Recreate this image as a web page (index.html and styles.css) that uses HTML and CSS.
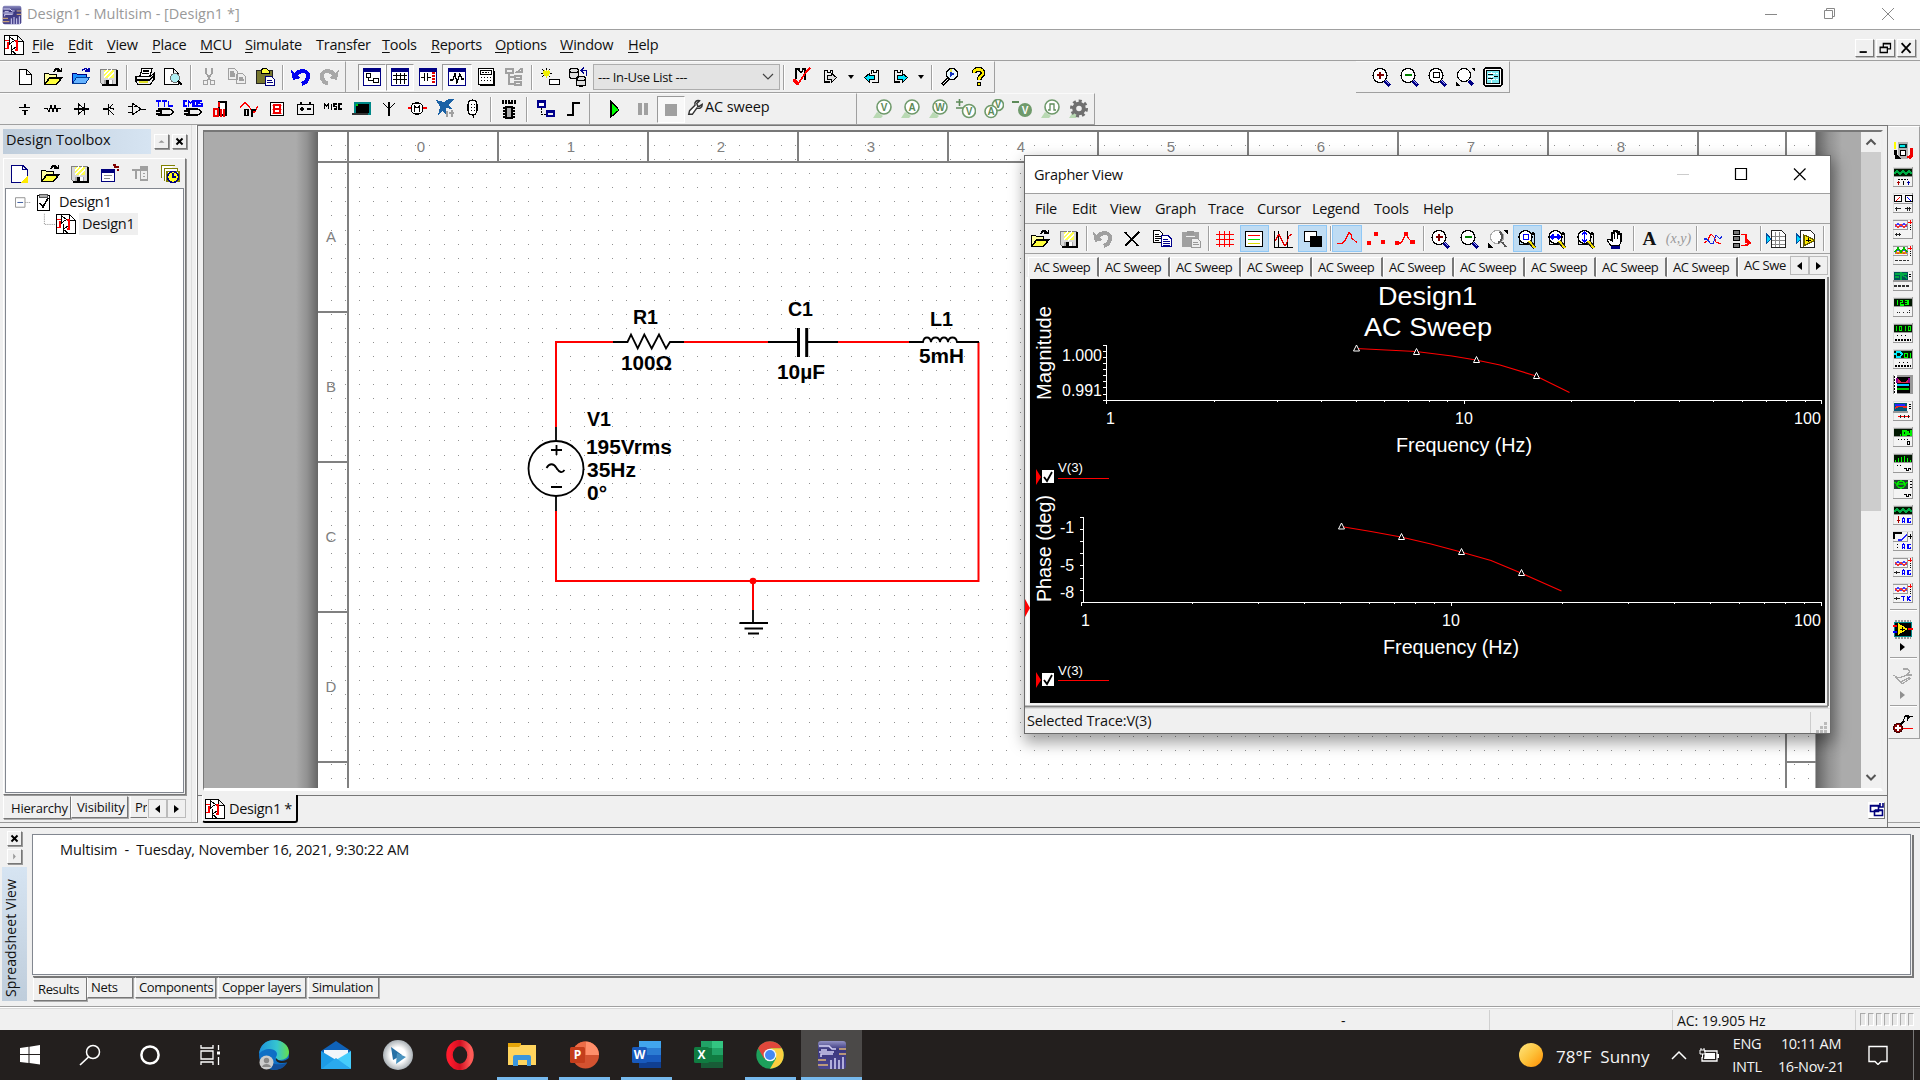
FILE: index.html
```html
<!DOCTYPE html>
<html lang="en">
<head>
<meta charset="utf-8">
<title>Design1 - Multisim - [Design1 *]</title>
<link rel="stylesheet" href="styles.css">
</head>
<body>
<svg class="defs" aria-hidden="true">
<defs>
<linearGradient id="gl" x1="0" x2="1" y1="0" y2="0"><stop offset="0" stop-color="#ababab"/><stop offset=".5" stop-color="#929292"/><stop offset="1" stop-color="#666"/></linearGradient>
<linearGradient id="gr" x1="0" x2="1" y1="0" y2="0"><stop offset="0" stop-color="#666"/><stop offset=".5" stop-color="#929292"/><stop offset="1" stop-color="#ababab"/></linearGradient>
<linearGradient id="sun" x1="0" x2="1" y1="0" y2="1"><stop offset="0" stop-color="#ffe680"/><stop offset=".5" stop-color="#fdc33c"/><stop offset="1" stop-color="#ff8c00"/></linearGradient>
<linearGradient id="edgeA" x1="0" x2="1" y1="0" y2="0"><stop offset="0" stop-color="#1c93dd"/><stop offset=".6" stop-color="#36c5d0"/><stop offset="1" stop-color="#66e04a"/></linearGradient>
<linearGradient id="opera" x1="0" x2="1" y1="0" y2="0"><stop offset="0" stop-color="#ff1b2d"/><stop offset=".5" stop-color="#d30e20"/><stop offset="1" stop-color="#ff5b57"/></linearGradient>
<radialGradient id="play"><stop offset=".5" stop-color="#fff"/><stop offset="1" stop-color="#a9b0b5"/></radialGradient>
<linearGradient id="ms" x1="0" x2="0" y1="0" y2="1"><stop offset="0" stop-color="#9292c4"/><stop offset=".3" stop-color="#3a377e"/><stop offset="1" stop-color="#4c4690"/></linearGradient>
</defs>
<symbol id="new" viewBox="0 0 20 20"><path d="M4.500 2.500h7l5 5v10h-12zM11.500 2.500v5h5" fill="#fff" stroke="#000" stroke-width="1.300"/></symbol>
<symbol id="open" viewBox="0 0 20 20"><path d="M1.500 17V6.500h4l1 1h7V11" fill="#ffffa0" stroke="#000"/><path d="M1.500 17.500l5-6.500h12l-5 6.500z" fill="#ffff3c" stroke="#000" stroke-width="1.500"/><path d="M11 5c1-4 5-4 6-1m-3 0h4.500V.5" stroke="#000" stroke-width="1.600"/></symbol>
<symbol id="openb" viewBox="0 0 20 20"><path d="M1.500 17V6.500h4l1 1h9V11" fill="#1e90ff" stroke="#00007c"/><path d="M1.500 16.500l4-6h13l-4 6z" fill="#66b3ff" stroke="#003c96"/><path d="M11 4c2-3 5-3 6 0m-3 0h4V1" stroke="#00a" stroke-width="1.400"/></symbol>
<symbol id="save" viewBox="0 0 20 20"><path d="M1.500 2.500h16v15h-14l-2-2z" fill="#d8d8d8" stroke="#808080"/><path d="M5 3h10v8H5z" fill="#ffff50"/><path d="M5 6l4-3M5 10l8-7M9 11l6-5" stroke="#fff" stroke-width="1.500"/><path d="M5 12.500h9v5H5z" fill="#aaa"/><path d="M10 13h3v4h-3z" fill="#fff"/><path d="M3 18h15V3" stroke="#000" stroke-width="1.600"/><path d="M7 13h3v5H7z" fill="#000"/></symbol>
<symbol id="print" viewBox="0 0 20 20"><path d="M5 9l2-7.500h10L15 9" fill="#fff" stroke="#000" stroke-width="1.300"/><path d="M1 9.500h14l4-3v6l-4 5H3l-2-3zM1 13h14l4-5M8 4h6M7 6.500h7" fill="none" stroke="#000" stroke-width="1.300"/><path d="M4 15h9" stroke="#dede28" stroke-width="2"/></symbol>
<symbol id="preview" viewBox="0 0 20 20"><path d="M1.500 1.500h9l5 5v11h-14zM10.500 1.500v5h5" fill="#fff" stroke="#000" stroke-width="1.300"/><circle cx="12" cy="11" r="4.500" fill="#aeeef2" stroke="#707070"/><path d="M15 14l4 4" stroke="#000" stroke-width="2.500"/></symbol>
<symbol id="cut" viewBox="0 0 20 20"><path d="M7 1v5l5 8M13 1v5l-5 8" stroke="#a0a0a0" stroke-width="1.700"/><circle cx="6.500" cy="15.500" r="2.200" stroke="#a0a0a0" stroke-width="1.500"/><circle cx="13.500" cy="15.500" r="2.200" stroke="#a0a0a0" stroke-width="1.500"/></symbol>
<symbol id="copyg" viewBox="0 0 20 20"><path d="M1.500 1.500h6l3 3v8h-9zM10.500 6.500h5l3 3v7h-9v-10M3 5h4M3 7h5M3 9h5M12 11h4M12 13h5" stroke="#a0a0a0" stroke-width="1.300" fill="#eee"/></symbol>
<symbol id="copy" viewBox="0 0 20 20"><path d="M1.500 1.500h6l3 3v9h-9z" fill="#fff" stroke="#000" stroke-width="1.200"/><path d="M3 5h4M3 7h6M3 9h6M3 11h4" stroke="#000"/><path d="M9.500 6.500h6l4 3v8h-10z" fill="#fff" stroke="#00008b" stroke-width="1.200"/><path d="M11 10h5M11 12h7M11 14h7M11 16h7" stroke="#00008b"/></symbol>
<symbol id="paste" viewBox="0 0 20 20"><path d="M1.500 3.500h16v13h-16z" fill="#77772f" stroke="#222" stroke-width="1.500"/><path d="M6 4l2-3h3l3 3v2H6z" fill="#ffff3c" stroke="#000"/><path d="M10.500 9.500h6l3 3v6h-9z" fill="#fff" stroke="#00007c" stroke-width="1.300"/><path d="M12 13h5M12 15h6" stroke="#00007c"/></symbol>
<symbol id="pasteg" viewBox="0 0 20 20"><path d="M1.500 3.500h16v14h-16z" fill="#a0a0a0" stroke="#a0a0a0"/><path d="M6 2h7v4H6z" fill="#999"/><path d="M5 7h9" stroke="#eee"/><path d="M10.500 9.500h6l3 3v6h-9z" fill="#eee" stroke="#999" stroke-width="1.300"/><path d="M12 13h5M12 15h6" stroke="#999"/></symbol>
<symbol id="undo" viewBox="0 0 20 20"><path d="M4 8c5-6 15-5 13 3-1 3-3 5-6 6" stroke="#0000f0" stroke-width="4"/><path d="M0 3l2 10 8-2z" fill="#0000f0"/></symbol>
<symbol id="undog" viewBox="0 0 20 20"><path d="M4 8c5-6 15-5 13 3-1 3-3 5-6 6" stroke="#a0a0a0" stroke-width="4"/><path d="M0 3l2 10 8-2z" fill="#a0a0a0"/></symbol>
<symbol id="redog" viewBox="0 0 20 20"><path d="M16 8C11 2 1 3 3 11c1 3 3 5 6 6" stroke="#a8a8a8" stroke-width="4"/><path d="M20 3l-2 10-8-2z" fill="#a8a8a8"/></symbol>
<symbol id="tbx" viewBox="0 0 20 20"><path d="M1.500 1.500h17v17h-17z" fill="#fff" stroke="#000084" stroke-width="1.500"/><path d="M1 3h18" stroke="#000084" stroke-width="3"/><path d="M4.500 6.500h4v4h-4zM11.500 11.500h5v4h-5zM6.500 11v2.500h5" stroke="#000" stroke-width="1.400"/></symbol>
<symbol id="sheet" viewBox="0 0 20 20"><path d="M1.500 1.500h17v17h-17z" fill="#fff" stroke="#000084" stroke-width="1.500"/><path d="M1 3h18" stroke="#000084" stroke-width="3"/><path d="M3 8.500h14M3 12.500h14M6.500 6v11M10.500 6v11M14.500 6v11" stroke="#000" stroke-width="1.300"/></symbol>
<symbol id="spice" viewBox="0 0 20 20"><path d="M1.500 1.500h17v17h-17z" fill="#fff" stroke="#000084" stroke-width="1.500"/><path d="M1 3h18" stroke="#000084" stroke-width="3"/><path d="M3 10.500h3M6.500 6v8M9.500 6v8M10 10.500h3" stroke="#000" stroke-width="1.200"/><path d="M15.500 5v12" stroke="#e00000" stroke-width="3" stroke-dasharray="2 1"/></symbol>
<symbol id="graph" viewBox="0 0 20 20"><path d="M1.500 1.500h17v17h-17z" fill="#fff" stroke="#000084" stroke-width="1.500"/><path d="M1 3h18" stroke="#000084" stroke-width="3"/><path d="M3 13h3l2-6 2 9 3-9 2 5h2" stroke="#000" stroke-width="1.300"/></symbol>
<symbol id="calc" viewBox="0 0 20 20"><path d="M2.500 1.500h15v16h-15z" fill="#fff" stroke="#000" stroke-width="1.400"/><path d="M4.500 3.500h11v4h-11z" stroke="#000"/><path d="M6 5.500h7" stroke="#000" stroke-dasharray="2 1"/><path d="M5 10.500h11M5 13.500h11" stroke="#000" stroke-width="1.300" stroke-dasharray="1 2"/><path d="M4 18.500h14.500V4" stroke="#000"/></symbol>
<symbol id="treeg" viewBox="0 0 20 20"><path d="M2 2h7v4H2zM11 9h6v3h-6zM11 15h6v3h-6zM5 6v11h6M5 10h6M17 2l-4 3h5V1" stroke="#a0a0a0" stroke-width="1.500"/></symbol>
<symbol id="comp" viewBox="0 0 20 20"><path d="M9.500 12.500h10v5h-10z" fill="#fff" stroke="#000" stroke-width="1.500"/><path d="M1 6h3M8 6h4M6 1v10M2 2l8 8M10 2l-8 8" stroke="#000"/><path d="M3 6h7M6.500 3v8M4 4l5 5M9 4L4 9" stroke="#f0f000" stroke-width="1.500"/></symbol>
<symbol id="db" viewBox="0 0 20 20"><path d="M1.500 3.500v6c0 3 9 3 9 0v-6c0-3-9-3-9 0s9 3 9 0M8.500 11.500v6c0 2 9 2 9 0v-6c0-3-9-3-9 0s9 3 9 0" fill="#ddd" stroke="#000" stroke-width="1.300"/><path d="M13.500 3.500h5V9M16 1l-3 2.500 3 2.500" stroke="#00008b" stroke-width="1.400"/></symbol>
<symbol id="erc" viewBox="0 0 20 20"><path d="M4 12V2h3c0 4 4 4 4 0h2v11" stroke="#000" stroke-width="1.300"/><path d="M2 12l4 5 8-12 4-4" stroke="#f00" stroke-width="1.600"/><path d="M2 13l4 4" stroke="#f00" stroke-width="3"/></symbol>
<symbol id="fwd" viewBox="0 0 20 20"><path d="M4.500 3v12M4.500 3.500h3c0 3 3 3 3 0h2v4M4 15h6" stroke="#000" stroke-width="1.300"/><path d="M7.500 8.500h4v-2l5 4-5 5v-3h-4z" fill="#ddd" stroke="#000"/></symbol>
<symbol id="fwdc" viewBox="0 0 20 20"><path d="M4.500 3v12M4.500 3.500h3c0 3 3 3 3 0h2v4M4 15h6" stroke="#000" stroke-width="1.300"/><path d="M7.500 8.500h5v-2l5 4-5 5v-3h-5z" fill="#00e6ff" stroke="#000"/></symbol>
<symbol id="bckc" viewBox="0 0 20 20"><path d="M9.500 7V3.500h2c0 3 3 3 3 0h2v12h-7" stroke="#000" stroke-width="1.300"/><path d="M12.500 8.500h-5v-2l-5 4 5 5v-3h5z" fill="#00e6ff" stroke="#000"/></symbol>
<symbol id="find" viewBox="0 0 20 20"><circle cx="12" cy="7" r="5.500" fill="#e8f8ff" stroke="#000" stroke-width="1.300"/><path d="M8 12l-6 6" stroke="#000" stroke-width="3"/><path d="M8 12l-5.500 5.500" stroke="#fff"/><path d="M10 4l5 3-5 3z" fill="#1234c0"/><path d="M11 2v3" stroke="#e6e650" stroke-width="2"/></symbol>
<symbol id="help" viewBox="0 0 20 20"><path d="M6 6c0-5 9-5 9 0 0 3-4 3-4 7" stroke="#000" stroke-width="5"/><path d="M6 6c0-5 9-5 9 0 0 3-4 3-4 7" stroke="#ffee00" stroke-width="2.500"/><circle cx="11" cy="17" r="2" fill="#fe0" stroke="#000"/></symbol>
<symbol id="zin" viewBox="0 0 20 20"><circle cx="9" cy="8.500" r="7" fill="#fff" stroke="#000" stroke-width="1.300"/><path d="M5.500 8h7M9 4.500v7" stroke="#800000" stroke-width="2.800"/><path d="M14 14l5 5" stroke="#000084" stroke-width="3.500"/><path d="M14 13l4 4" stroke="#aaf" /></symbol>
<symbol id="zout" viewBox="0 0 20 20"><circle cx="9" cy="8.500" r="7" fill="#fff" stroke="#000" stroke-width="1.300"/><path d="M5.500 8h7" stroke="#008000" stroke-width="2.800"/><path d="M14 14l5 5" stroke="#000084" stroke-width="3.500"/><path d="M14 13l4 4" stroke="#aaf"/></symbol>
<symbol id="zarea" viewBox="0 0 20 20"><circle cx="9" cy="8.500" r="7" fill="#fff" stroke="#000" stroke-width="1.300"/><path d="M6.500 5.500h6v5h-6z" stroke="#000" stroke-width="1.400"/><path d="M14 14l5 5" stroke="#000084" stroke-width="3.500"/><path d="M14 13l4 4" stroke="#aaf"/></symbol>
<symbol id="zfit" viewBox="0 0 20 20"><circle cx="9" cy="8" r="6.500" fill="#fff" stroke="#000" stroke-width="1.300"/><path d="M14 14l4 4" stroke="#000084" stroke-width="3"/><path d="M16 1h4v4zM1 19v-4l4 4z" fill="#000"/></symbol>
<symbol id="zfit2" viewBox="0 0 20 20"><circle cx="9" cy="8" r="6.500" fill="#fff" stroke="#aaa" stroke-width="1.300"/><path d="M12 3c4 4 2 9-2 11M14 13l4 5" stroke="#555" stroke-width="2"/><path d="M15 1h5v5zM0 19v-5l5 5z" fill="#000"/></symbol>
<symbol id="zfull" viewBox="0 0 20 20"><rect x="1" y="1" width="18" height="18" rx="1.500" fill="#fff" stroke="#000" stroke-width="1.500"/><path d="M3.500 3.500h13v13h-13z" fill="#7feaf0" stroke="#000" stroke-width="1.400"/><path d="M5 6.500h10M5 9.500h10M5 12.500h10M8.500 5v11" stroke="#fff" stroke-dasharray="3 1"/><path d="M5 7.500h5M5 11.500h5M11 9.500h4" stroke="#000"/></symbol>
<symbol id="src" viewBox="0 0 20 20"><path d="M4 8.500h11M7 11.500h6M10 4.500v4M10 12v4" stroke="#000" stroke-width="1.400"/></symbol>
<symbol id="res" viewBox="0 0 20 20"><path d="M1 9.500h3l2 3 2-6 2 6 2-6 2 6 1-3h3" stroke="#000"/></symbol>
<symbol id="dio" viewBox="0 0 20 20"><path d="M3 10h15M7.500 5v10l6-5zM13.500 4v12" stroke="#000" stroke-width="1.200"/></symbol>
<symbol id="bjt" viewBox="0 0 20 20"><path d="M4 10h5M9.500 5v11M10 9l4-4M10 11l5 5M11 9l4 1" stroke="#000" stroke-width="1.300"/></symbol>
<symbol id="opa" viewBox="0 0 20 20"><path d="M5 4v12l9-6zM1 7h4M1 13h4M14 10h5M7 7h3" stroke="#000"/></symbol>
<symbol id="ttl" viewBox="0 0 20 20"><path d="M3 10h12l4 3-4 3H3M1 12h4M1 15h4M6 10v6" stroke="#000" stroke-width="1.100"/><path d="M1 2h5M3.500 2v6M7 2h5M9.500 2v6M13.500 2v5h4" stroke="#00f" stroke-width="1.500"/></symbol>
<symbol id="cmos" viewBox="0 0 20 20"><path d="M3 10h12l4 3-4 3H3M1 12h4M1 15h4M6 10v6" stroke="#000" stroke-width="1.100"/><path d="M4 2H1v5h3M5.500 8V2l2 2 2-2v6M11 2h3v5h-3zM19 2h-3v2.500h3V7h-4" stroke="#00f" stroke-width="1.300"/></symbol>
<symbol id="mdig" viewBox="0 0 20 20"><path d="M8 3h7v13H8z" stroke="#000" stroke-width="1.200" fill="#fff"/><path d="M2.500 10h4v7h-4zM10 10v8M13 10v8M8 3v5" stroke="#f00000" stroke-width="2"/></symbol>
<symbol id="mix" viewBox="0 0 20 20"><path d="M1 9l5-6 5 6 4 5 4-7" stroke="#f00" stroke-width="1.200"/><path d="M6 10.500h3v6H6zM13 10v8M14 11h3" stroke="#000" stroke-width="1.800"/></symbol>
<symbol id="ind" viewBox="0 0 20 20"><path d="M3.500 3.500h13v13h-13z" fill="#fff" stroke="#000" stroke-width="1.500"/><path d="M5 6h10M5 10h10M5 14h10" stroke="#f88" stroke-width="1"/><path d="M7 6h6v8H7zM7 10h6" stroke="#e00" stroke-width="1.600"/></symbol>
<symbol id="pwr" viewBox="0 0 20 20"><path d="M2.500 5.500h16v10h-16zM6 5V3M15 5V3M5 10h4M12 10h4M7 8v4" stroke="#000" stroke-width="1.400"/></symbol>
<symbol id="misc" viewBox="0 0 20 20"><path d="M1.500 10V5l2 2 2-2v5M8.500 4.500v6M13.500 5h-2.500v2.500h2.500V10h-3M19 5h-3v5h3" stroke="#000" stroke-width="1.100"/></symbol>
<symbol id="per" viewBox="0 0 20 20"><path d="M4 4h15v11H4z" fill="#000" stroke="#088" stroke-width="1.500"/><path d="M1 15h16" stroke="#333" stroke-width="2"/><path d="M5 6h2" stroke="#0c0" stroke-width="2"/></symbol>
<symbol id="ant" viewBox="0 0 20 20"><path d="M10 3v14M4 4l6 6 6-6" stroke="#000" stroke-width="1.300"/></symbol>
<symbol id="mot" viewBox="0 0 20 20"><path d="M1 9h3M16 9h4" stroke="#f00" stroke-width="2"/><rect x="4.500" y="4" width="11" height="11" rx="4" fill="#fff" stroke="#000" stroke-width="1.300"/><path d="M7.500 13V7l2.500 2 2.500-2v6" stroke="#000" stroke-width="1.200"/></symbol>
<symbol id="ni" viewBox="0 0 20 20"><path d="M1 1l8 2 5-3h5l-5 6 3 4-6-1 1 8-5-5-4 4 2-8z" fill="#1b62a6"/><path d="M12 12v6M14 14h5M17 11v7" stroke="#a0a0a0" stroke-width="1.500"/></symbol>
<symbol id="conn" viewBox="0 0 20 20"><rect x="5" y="1" width="9" height="15" rx="4.500" fill="#fff" stroke="#000" stroke-width="1.200"/><path d="M8 5v9M11 5v9" stroke="#000" stroke-dasharray="1 2"/><path d="M10 16v3" stroke="#000"/></symbol>
<symbol id="mcu" viewBox="0 0 20 20"><path d="M4 1v4M7 1v4M10 1v3h3v-3M16 1v4" stroke="#000" stroke-width="1.400"/><path d="M7 8h6v11H7z" fill="#aaa" stroke="#000" stroke-width="2"/><path d="M4 9h3M4 12h3M4 15h3M4 18h3M13 9h3M13 12h3M13 15h3M13 18h3" stroke="#000" stroke-width="1.600"/></symbol>
<symbol id="hb" viewBox="0 0 20 20"><path d="M3 2h7v6H3z" fill="#fff" stroke="#00008b" stroke-width="1.500"/><path d="M2 3h8M11 13h8" stroke="#00008b" stroke-width="2.500"/><path d="M12 12h7v5h-7z" stroke="#00008b" stroke-width="1.400"/><path d="M6 9v6h5" stroke="#000" stroke-dasharray="2 1"/></symbol>
<symbol id="bus" viewBox="0 0 20 20"><path d="M4 16h6V4h7" stroke="#000" stroke-width="2"/></symbol>
<symbol id="run" viewBox="0 0 20 20"><path d="M6 2v16l8-7z" fill="#0f0" stroke="#000" stroke-width="1.200"/></symbol>
<symbol id="pause" viewBox="0 0 20 20"><path d="M5 4h4v12H5zM11 4h4v12h-4z" fill="#a0a0a0"/></symbol>
<symbol id="stop" viewBox="0 0 20 20"><path d="M4 5h12v12H4z" fill="#a0a0a0"/></symbol>
<symbol id="wrench" viewBox="0 0 20 20"><path d="M3 17l1-4 6-6c-1-4 2-6 5-5l-3 3 1 3h2l3-2c0 4-3 5-6 4l-5 7z" fill="#fff" stroke="#333" stroke-width="1.600"/></symbol>
<symbol id="pr" viewBox="0 0 20 20"><path d="M1 19l4-6 6 4-2 2z" fill="#b9d9b3"/><circle cx="12" cy="8" r="7" fill="#fff" stroke="#6f9a6b" stroke-width="1.600"/></symbol>
<symbol id="gear" viewBox="0 0 20 20"><path d="M1 19l4-6 5 4-2 2z" fill="#b9d9b3"/><circle cx="11" cy="9.500" r="7.500" stroke="#707070" stroke-width="3" stroke-dasharray="3 2.800"/><circle cx="11" cy="9.500" r="4.800" stroke="#707070" stroke-width="4"/></symbol>
<symbol id="sch" viewBox="0 0 20 20"><path d="M.5.500h13l6 6v13H.5zM13.500.500v6h6" fill="#fff" stroke="#000" stroke-width="1.200"/><path d="M1 13.500h3V7M1 5.500h4M11 6h2v9h-2" stroke="#f00" stroke-width="1.400"/><path d="M5.500 2v7l5-3.500zM7.500 10v9M8 15l4-3M8 16l4 3" stroke="#000"/></symbol>
<symbol id="new2" viewBox="0 0 20 20"><path d="M1.500 1.500h11l5 4v13h-16zM12.500 1.500v4h5" fill="#fff" stroke="#00007c" stroke-width="1.500"/><path d="M18 11v8h-8z" fill="#ffe900"/></symbol>
<symbol id="prop" viewBox="0 0 20 20"><path d="M1.500 5.500h13v12h-13z" fill="#fff" stroke="#00007c" stroke-width="1.400"/><path d="M1 7h14" stroke="#00007c" stroke-width="3"/><path d="M4 11h8M4 14h6" stroke="#888"/><path d="M13 1h3M14 3h5M17 6h2" stroke="#800000" stroke-width="2"/></symbol>
<symbol id="rename" viewBox="0 0 20 20"><path d="M10 2h8v15h-8z" fill="#a0a0a0"/><path d="M2 6h8M6 6v9" stroke="#a0a0a0" stroke-width="2"/><path d="M12 8h4v6h-4zM12 11h4" stroke="#eee" stroke-width="1.300"/></symbol>
<symbol id="hist" viewBox="0 0 20 20"><path d="M1.500 14V1.500h13M4.500 17V4.500h13V8M7 7.500h12v10H7z" fill="#fff" stroke="#808000" stroke-width="1.400"/><circle cx="13" cy="13" r="5.500" fill="#ffff1e" stroke="#00007c" stroke-width="1.600"/><path d="M13 9v4h3" stroke="#00007c" stroke-width="1.600"/></symbol>
<symbol id="clip" viewBox="0 0 20 20"><path d="M3.500 3.500h12v15h-12z" fill="#fff" stroke="#000" stroke-width="1.500"/><path d="M5.500 2.500h8v3h-8z" fill="#aaa" stroke="#555"/><path d="M6 11l3 4 5-9" stroke="#000" stroke-width="1.700"/></symbol>
<symbol id="x" viewBox="0 0 20 20"><path d="M3 3l13 14M17 3L3 17" stroke="#000" stroke-width="1.600"/></symbol>
<symbol id="rgrid" viewBox="0 0 20 20"><path d="M1 5.500h18M1 10.500h18M1 15.500h18M4.500 2v16M9.500 2v16M14.500 2v16" stroke="#f00" stroke-width="1.400"/></symbol>
<symbol id="leg" viewBox="0 0 20 20"><path d="M1.500 2.500h17v15h-17z" fill="#fff" stroke="#000" stroke-width="1.800"/><path d="M4 6.500h12" stroke="#f00"/><path d="M4 10.500h12" stroke="#0d0"/><path d="M4 14.500h12" stroke="#dd0" stroke-width="1.300"/></symbol>
<symbol id="curs" viewBox="0 0 20 20"><path d="M1.500 2v16.500h18M5.500 2v16M14.500 2v16" stroke="#000"/><path d="M2 12L6 5l5 11h2l3-9 3-2" stroke="#e00000" stroke-width="1.200"/></symbol>
<symbol id="bw" viewBox="0 0 20 20"><path d="M7 7h12v11H7z" fill="#000"/><path d="M1.500 2.500h12v10h-12z" fill="#fff" stroke="#000" stroke-width="1.600"/><path d="M7 7h6v5H7z" fill="#000"/></symbol>
<symbol id="l1" viewBox="0 0 20 20"><path d="M0 14.500h5l3-3 4-8 2 2 1 4 5 4" stroke="#f00" stroke-width="1.100"/></symbol>
<symbol id="l2" viewBox="0 0 20 20"><g fill="#f00"><circle cx="3" cy="14" r="2.500"/><circle cx="10" cy="5" r="2.300"/><circle cx="17" cy="13" r="2.500"/></g></symbol>
<symbol id="l3" viewBox="0 0 20 20"><path d="M3 14h3l5-9 3 5 3 3" stroke="#f00" stroke-width="1.300"/><g fill="#f00"><circle cx="2" cy="14" r="2.200"/><circle cx="11" cy="5" r="2.200"/><circle cx="17.500" cy="13" r="2.500"/></g></symbol>
<symbol id="zr" viewBox="0 0 20 20"><path d="M2.500 16V8M17.500 4v13h-4M16 3v3" stroke="#000" stroke-width="1.500"/><circle cx="8.500" cy="8" r="6.500" fill="#fff" stroke="#000" stroke-width="1.300"/><path d="M2 15.500h10" stroke="#000" stroke-width="1.300"/><path d="M12 12l6 7" stroke="#222" stroke-width="4"/><path d="M12 12l6 7" stroke="#f4e000" stroke-width="2"/></symbol>
<symbol id="hand" viewBox="0 0 20 20"><path d="M6 17l-4-6 2-1 3 2V4h2V2h3v1h2v2h2v8l-2 4z" fill="#fff" stroke="#000" stroke-width="1.300"/><path d="M9.500 4v6M12.500 4v6" stroke="#000"/><path d="M6 17h9v3H6z" fill="#000084"/></symbol>
<symbol id="wav" viewBox="0 0 20 20"><path d="M1 14l3-2 4-7 3 3 2 5 5 2" stroke="#f00" stroke-width="1.200"/><path d="M1 10h3l3 4 3 1 3-9 4 4 2-3" stroke="#1428e0" stroke-width="1.200"/></symbol>
<symbol id="tree2" viewBox="0 0 20 20"><path d="M1.500 1.500h6v4h-6zM1.500 7.500h6v4h-6zM1.500 14.500h6v4h-6z" fill="#777" stroke="#000" stroke-width="1.300"/><path d="M9 5.500h5v8h5M9 16.500h5v-2" stroke="#f00" stroke-width="1.200"/><path d="M15 10v7l5-3z" fill="#f00"/></symbol>
<symbol id="xls" viewBox="0 0 20 20"><path d="M5.500 1.500h10l4 4v13h-14z" fill="#fff" stroke="#222" stroke-width="1.300"/><path d="M6 7.500h13M6 11.500h13M6 15h13M9.500 3v15M13.500 3v15" stroke="#888"/><path d="M0 4l5 6-5 5z" fill="#00d7ff" stroke="#0050a0"/></symbol>
<symbol id="lv" viewBox="0 0 20 20"><path d="M4.500 1.500h10l4 4v13h-14z" fill="#fff" stroke="#222" stroke-width="1.300"/><path d="M8 6l11 5-11 6z" fill="#ffec00" stroke="#665c00" stroke-width="1.300"/><path d="M10 11h5M12 9v4" stroke="#000"/><path d="M0 4l5 6-5 5z" fill="#00d7ff" stroke="#0050a0"/></symbol>
<symbol id="frame" viewBox="0 0 20 20"><path d="M.5 19V.5h19" stroke="#ddd"/><path d="M1 1h18v18H1z" fill="#f4f4f4"/><path d="M19.500 0v19.500H0" stroke="#999"/></symbol>
<symbol id="mm" viewBox="0 0 20 20"><path d="M5 1h10v17H5z" fill="#b4b4b4"/><path d="M6 3h8v4H6z" fill="#033"/><path d="M7 5h5" stroke="#0ee" stroke-width="1.500"/><circle cx="10" cy="12" r="3" stroke="#000" fill="#fff"/><path d="M2 1v7" stroke="#ff0" stroke-width="2"/><path d="M1 9h3v5l4 4H2z" fill="#000"/><path d="M17 7h3v8l-3 3-4-2 4-2z" fill="#f00000"/></symbol>
<symbol id="scr" viewBox="0 0 20 20"><use href="#frame"/><path d="M1 2h18v7H1z" fill="#001800"/><path d="M1 9.500h18M1 1.500h18" stroke="#999" stroke-width="1.500"/></symbol>
<symbol id="fg" viewBox="0 0 20 20"><use href="#scr"/><path d="M1 7l3-3 3 3 3-3 3 3 3-3 3 3" stroke="#0a4" stroke-width="2"/><path d="M5 12.500h10" stroke="#000" stroke-dasharray="2 1"/><path d="M4 15.500h3M5.500 14v4" stroke="#a00"/><path d="M10.500 14v4" stroke="#000"/><path d="M14 15.500h3M15.500 14v4" stroke="#00a"/></symbol>
<symbol id="watt" viewBox="0 0 20 20"><use href="#frame"/><path d="M1.500 2.500h7v6h-7zM12.500 2.500h7v6h-7z" fill="#fff" stroke="#000" stroke-width="1.300"/><path d="M3 8l4-4" stroke="#f00"/><path d="M14 4l4 4" stroke="#00f"/><path d="M1 10.500h18" stroke="#999"/><path d="M2 15.500h6M12 15.500h6M3.500 14v4M14.500 14v4M16.500 14v4" stroke="#222"/></symbol>
<symbol id="osc" viewBox="0 0 20 20"><use href="#frame"/><path d="M2 8l3-4 3 4 3-4 3 4" stroke="#44f" stroke-width="1.200"/><path d="M2 5l3 4 3-4 3 4 3-4" stroke="#e33" stroke-width="1.200"/><path d="M0 10.500h14.500V1M0 1.500h15" stroke="#999" stroke-width="1.200"/><path d="M15 3.500h4M17.500 1v4" stroke="#f00"/><path d="M17.500 6v5" stroke="#000" stroke-dasharray="1 1"/></symbol>
<symbol id="osc2" viewBox="0 0 20 20"><use href="#osc"/><path d="M2 15.500h6M3.500 14v3M6.500 14v3" stroke="#222"/></symbol>
<symbol id="osc4" viewBox="0 0 20 20"><use href="#osc"/><path d="M2 7l3-4 3 4 3-4 3 4" stroke="#0b0" stroke-width="1.500"/><path d="M2 9l3-2 3 2 3-2 3 2" stroke="#d90"/><path d="M2 15.500h14" stroke="#333" stroke-width="1.500" stroke-dasharray="3 1"/></symbol>
<symbol id="bode" viewBox="0 0 20 20"><use href="#frame"/><path d="M1 1h14v8H1z" fill="#055"/><path d="M2 3h5l7 4M2 6h4M9 3h5M8 1v8" stroke="#0a4" stroke-width="1.500"/><path d="M0 10h19" stroke="#999" stroke-width="1.500"/><path d="M17 3v4" stroke="#000" stroke-width="2" stroke-dasharray="1 1"/><path d="M1 15h15" stroke="#333" stroke-width="2" stroke-dasharray="3 1"/></symbol>
<symbol id="fc" viewBox="0 0 20 20"><use href="#scr"/><path d="M4.500 3v5M7 3.500h2.500v2H7.500V8h3M12 3.500h3v4h-3M12 5.500h3" stroke="#0f0" stroke-width="1.200"/><path d="M4 15.500h4M10 15.500h2M14 15.500h4M16 13v4" stroke="#222" stroke-dasharray="1 1"/></symbol>
<symbol id="wg" viewBox="0 0 20 20"><use href="#scr"/><path d="M3.500 3v5M6.500 3.500h2v4h-2zM12.500 3v5M15.500 3.500h2v4h-2z" stroke="#0e0" stroke-width="1.200"/><path d="M4 12.500h12" stroke="#000" stroke-dasharray="1 3"/><path d="M2 17h16" stroke="#000" stroke-width="2" stroke-dasharray="2 1"/></symbol>
<symbol id="lc" viewBox="0 0 20 20"><use href="#scr"/><path d="M1 5h2l1-2h3l2 2-2 3H4L3 5" stroke="#0ef" stroke-width="1.500"/><path d="M11.500 4.500h3v4h-3zM17.500 4v5" stroke="#0f0" stroke-width="1.200"/><path d="M6 13.500h9" stroke="#000" stroke-dasharray="1 3"/><path d="M2 17h16" stroke="#000" stroke-width="2" stroke-dasharray="2 1"/></symbol>
<symbol id="la" viewBox="0 0 20 20"><path d="M0 0h20v19H0z" fill="#999"/><path d="M1 0h3v19H1z" fill="#fff"/><path d="M1.500 1v17" stroke="#000" stroke-dasharray="2 1"/><path d="M4 2h13v16H4z" fill="#000"/><path d="M4 2l4 5h5l4-5v6H4z" fill="#e02050"/><path d="M4 3v5M16 3v5" stroke="#808" stroke-width="2"/><path d="M4 10h12" stroke="#0cf" stroke-width="1.400"/><path d="M4 14h12" stroke="#0c0" stroke-width="1.400"/></symbol>
<symbol id="iv" viewBox="0 0 20 20"><use href="#frame"/><path d="M1 2h13v8H1z" fill="#057"/><path d="M2 7l4-2 8 1" stroke="#e22" stroke-width="2"/><path d="M2 4h10" stroke="#22f" stroke-width="1.500"/><path d="M0 11h15" stroke="#999" stroke-width="2"/><path d="M17 3v5" stroke="#000" stroke-width="2" stroke-dasharray="1 1"/><path d="M5 15.500h12" stroke="#f00"/><path d="M7.500 14v3M11.500 14v3M15.500 14v3" stroke="#222"/></symbol>
<symbol id="dist" viewBox="0 0 20 20"><use href="#scr"/><path d="M7 8h1M10 4h3v4h-3zM15 4v3h3M18 3v6" stroke="#0e0" stroke-width="1.400"/><path d="M5 12.500h10" stroke="#000" stroke-dasharray="1 2"/><circle cx="15.500" cy="16" r="1.500" stroke="#000"/></symbol>
<symbol id="spec" viewBox="0 0 20 20"><use href="#scr"/><path d="M2.500 7v2M5.500 5v4M8.500 4v5M11.500 3v6M14.500 5v4M17.500 7v2" stroke="#0f0" stroke-width="1.800"/><path d="M4 12.500h5" stroke="#000" stroke-dasharray="1 2"/><path d="M11 15h2v2h2v-2h2v2" stroke="#000"/></symbol>
<symbol id="net" viewBox="0 0 20 20"><use href="#frame"/><path d="M1 1h14v9H1z" fill="#243"/><circle cx="8" cy="5.500" r="3.500" stroke="#0e0" stroke-width="1.500"/><path d="M2 3l3 5M14 3l-3 5M5 5h6" stroke="#0c0" stroke-width="1.500"/><path d="M17.500 2v8" stroke="#000" stroke-width="2" stroke-dasharray="1 2"/><path d="M11 15h2v2h2v-2h2v2" stroke="#000"/></symbol>
<symbol id="ag" viewBox="0 0 20 20"><path d="M9.500 18v-3.500l1-1.500 1 1.500V18M9.500 16.500h2M17.500 13.500h-2.500v4h2.500V15.500" stroke="#00f" stroke-width="1.200"/></symbol>
<symbol id="afg" viewBox="0 0 20 20"><use href="#scr"/><path d="M1 7l3-3 3 3 3-3 3 3 3-3 3 3" stroke="#0a4" stroke-width="2"/><use href="#ag"/><path d="M5.500 11v7M4 15.500h3" stroke="#a00"/></symbol>
<symbol id="amm" viewBox="0 0 20 20"><use href="#frame"/><path d="M1 8V2h8" stroke="#000" stroke-width="2"/><path d="M5 9h4l5-6" stroke="#22f" stroke-width="1.300"/><path d="M0 10.500h14.500V1" stroke="#999"/><path d="M15 5.500h4M17.500 3v5" stroke="#000" stroke-width="1.400"/><use href="#ag"/><path d="M4.500 13v4" stroke="#000" stroke-dasharray="1 2"/></symbol>
<symbol id="aos" viewBox="0 0 20 20"><use href="#osc"/><use href="#ag"/><path d="M1 15.500h6M3.500 14v3" stroke="#222" stroke-width="1.200"/></symbol>
<symbol id="tos" viewBox="0 0 20 20"><use href="#osc"/><path d="M8 13.500h4M10.500 13v5M14.500 13v5M18 13l-3 2.500 3 2.500" stroke="#00f" stroke-width="1.200"/><path d="M1 15.500h6M3.500 14v3" stroke="#222" stroke-width="1.200"/></symbol>
<symbol id="lvi" viewBox="0 0 20 20"><path d="M1 3h17v14H1z" fill="#000" stroke="#088"/><path d="M2 1.500h16M2 18.500h16" stroke="#999" stroke-width="2" stroke-dasharray="2 1"/><path d="M5 4v12l10-6z" fill="#fe0"/><path d="M7 10h5M9.500 8v4" stroke="#000"/><path d="M0 7h4M15 10h5" stroke="#f00" stroke-width="1.800"/><path d="M0 12.500h4" stroke="#00f" stroke-width="2"/></symbol>
<symbol id="elv" viewBox="0 0 20 20"><path d="M0 8l6 3 8-3M2 10l6 5 9-5M5 12l4 5 9-6M10 2h5l2 3-4 3h6" stroke="#a8a8a8" stroke-width="1.300"/></symbol>
<symbol id="cp" viewBox="0 0 20 20"><circle cx="5" cy="15" r="4.500" fill="#8b0000" stroke="#400"/><path d="M2 15h6M5 12v6" stroke="#fff" stroke-width="1.600"/><path d="M10 15.500h10" stroke="#f00"/><path d="M7 11l3-2 2-6h3v3l2-3 3 1" stroke="#000" stroke-width="1.200"/><path d="M7 12l4-4" stroke="#000" stroke-width="2.500"/></symbol>
<symbol id="ml" viewBox="0 0 30 30"><rect x="1" y="1" width="28" height="28" rx="3" fill="url(#ms)"/><path d="M2 6h10l3 3h4M2 12h15M4 17v-3h12M14 20v9M18 18v11M22 20v9M26 17v12M4 10h6" stroke="#d5d2f5" stroke-width="1.500"/><path d="M22 9h7M22 14h7M1 20h8M1 25h10" stroke="#e0b575" stroke-width="1.500"/></symbol>
</svg>

<div class="app">
<header class="title"><svg class="logo"><use href="#ml"/></svg><span>Design1 - Multisim - [Design1 *]</span>
<svg class="winbtn" viewBox="0 0 170 29"><path d="M15 14.500h12M74.500 10.500h8v8h-8zM76.500 10.500v-2h8v8h-2M132 8l12 12M144 8l-12 12" stroke="#888"/></svg></header>

<nav class="menu"><svg class="i"><use href="#sch"/></svg><span><u>F</u>ile</span><span><u>E</u>dit</span><span><u>V</u>iew</span><span><u>P</u>lace</span><span><u>M</u>CU</span><span><u>S</u>imulate</span><span>Tra<u>n</u>sfer</span><span><u>T</u>ools</span><span><u>R</u>eports</span><span><u>O</u>ptions</span><span><u>W</u>indow</span><span><u>H</u>elp</span>
<div class="mdibtn"><b><svg viewBox="0 0 20 17"><path d="M4 13h8" stroke="#000" stroke-width="2"/></svg></b><b><svg viewBox="0 0 20 17"><path d="M3.500 7.500h8v6h-8zM7 7V3.500h8v6h-3M7 4h8M3 8h8" stroke="#000" stroke-width="1.400"/></svg></b><b><svg viewBox="0 0 20 17"><path d="M4 3l10 11M14 3L4 14" stroke="#000" stroke-width="2"/></svg></b></div></nav>

<div class="row">
<div class="bar"><a><svg class="i"><use href="#new"/></svg></a><a><svg class="i"><use href="#open"/></svg></a><a><svg class="i"><use href="#openb"/></svg></a><a><svg class="i"><use href="#save"/></svg></a><hr><a><svg class="i"><use href="#print"/></svg></a><a><svg class="i"><use href="#preview"/></svg></a><hr><a><svg class="i"><use href="#cut"/></svg></a><a><svg class="i"><use href="#copyg"/></svg></a><a><svg class="i"><use href="#paste"/></svg></a><hr><a><svg class="i"><use href="#undo"/></svg></a><a><svg class="i"><use href="#redog"/></svg></a></div>
<div class="bar second"><a class="on"><svg class="i"><use href="#tbx"/></svg></a><a class="on"><svg class="i"><use href="#sheet"/></svg></a><a><svg class="i"><use href="#spice"/></svg></a><a class="on wide"><svg class="i"><use href="#graph"/></svg></a><a><svg class="i"><use href="#calc"/></svg></a><a><svg class="i"><use href="#treeg"/></svg></a><hr><a><svg class="i"><use href="#comp"/></svg></a><a><svg class="i"><use href="#db"/></svg></a><div class="combo"><span>--- In-Use List ---</span><svg viewBox="0 0 12 8"><path d="M1 1l5 5 5-5" stroke="#444" stroke-width="1.200"/></svg></div><hr><a><svg class="i"><use href="#erc"/></svg></a><a><svg class="i"><use href="#fwd"/></svg></a><i class="dn"></i><a><svg class="i"><use href="#bckc"/></svg></a><a><svg class="i"><use href="#fwdc"/></svg></a><i class="dn"></i><hr><a><svg class="i"><use href="#find"/></svg></a><a><svg class="i"><use href="#help"/></svg></a></div>
<div class="bar zoombar"><a><svg class="i"><use href="#zin"/></svg></a><a><svg class="i"><use href="#zout"/></svg></a><a><svg class="i"><use href="#zarea"/></svg></a><a><svg class="i"><use href="#zfit"/></svg></a><a><svg class="i"><use href="#zfull"/></svg></a></div>
</div>
<div class="row">
<div class="bar"><a><svg class="i"><use href="#src"/></svg></a><a><svg class="i"><use href="#res"/></svg></a><a><svg class="i"><use href="#dio"/></svg></a><a><svg class="i"><use href="#bjt"/></svg></a><a><svg class="i"><use href="#opa"/></svg></a><a><svg class="i"><use href="#ttl"/></svg></a><a><svg class="i"><use href="#cmos"/></svg></a><a><svg class="i"><use href="#mdig"/></svg></a><a><svg class="i"><use href="#mix"/></svg></a><a><svg class="i"><use href="#ind"/></svg></a><a><svg class="i"><use href="#pwr"/></svg></a><a><svg class="i"><use href="#misc"/></svg></a><a><svg class="i"><use href="#per"/></svg></a><a><svg class="i"><use href="#ant"/></svg></a><a><svg class="i"><use href="#mot"/></svg></a><a><svg class="i"><use href="#ni"/></svg></a><a><svg class="i"><use href="#conn"/></svg></a><hr><a><svg class="i"><use href="#mcu"/></svg></a><hr><a><svg class="i"><use href="#hb"/></svg></a><a><svg class="i"><use href="#bus"/></svg></a></div>
<div class="bar simbar"><a><svg class="i"><use href="#run"/></svg></a><a><svg class="i"><use href="#pause"/></svg></a><a class="on"><svg class="i"><use href="#stop"/></svg></a><svg class="wr"><use href="#wrench"/></svg><span>AC sweep</span></div>
<div class="bar probes"><a><svg class="i" viewBox="0 0 20 20"><use href="#pr"/><text x="12" y="12">V</text></svg></a><a><svg class="i" viewBox="0 0 20 20"><use href="#pr"/><text x="12" y="12">A</text></svg></a><a><svg class="i" viewBox="0 0 20 20"><use href="#pr"/><text x="12" y="12">W</text></svg></a><a><svg class="i" viewBox="0 0 20 20"><path d="M0 3h7M3.500 0v7M0 9h7" stroke="#5d8a59" stroke-width="1.600"/><circle cx="13" cy="12" r="6.500" fill="#fff" stroke="#6f9a6b" stroke-width="1.600"/><text x="13" y="16">V</text></svg></a><a><svg class="i" viewBox="0 0 20 20"><circle cx="14" cy="6" r="5.500" fill="#fff" stroke="#6f9a6b" stroke-width="1.600"/><circle cx="7" cy="12.500" r="6" fill="#fff" stroke="#6f9a6b" stroke-width="1.600"/><text x="7" y="16">A</text><text x="14" y="9">V</text></svg></a><a><svg class="i" viewBox="0 0 20 20"><path d="M0 3h7" stroke="#5d8a59" stroke-width="2"/><circle cx="13" cy="11" r="7" fill="#6f9a6b"/><text x="13" y="15" class="inv">V</text></svg></a><a><svg class="i" viewBox="0 0 20 20"><use href="#pr"/><path d="M8 11h2V5h4v6h2" stroke="#5d8a59" stroke-width="1.300"/></svg></a><a><svg class="i"><use href="#gear"/></svg></a></div>
</div>

<main class="main">
<aside class="toolbox">
<div class="tbhead"><h2>Design Toolbox</h2><b><svg viewBox="0 0 15 15"><path d="M4 9l3.500-3L11 9z" fill="#999"/></svg></b><b><svg viewBox="0 0 15 15"><path d="M4 4l7 7M11 4l-7 7" stroke="#000" stroke-width="2.200"/></svg></b></div>
<div class="tbpane">
<div class="tbtools"><svg class="i"><use href="#new2"/></svg><svg class="i"><use href="#open"/></svg><svg class="i"><use href="#save"/></svg><svg class="i"><use href="#prop"/></svg><svg class="i"><use href="#rename"/></svg><svg class="i"><use href="#hist"/></svg></div>
<div class="tree">
<div class="node"><svg class="tw" viewBox="0 0 20 22"><path d="M.5 6.500h10v10H.500z" fill="#fff" stroke="#919191"/><path d="M2.500 11.500h6" stroke="#36569c"/><path d="M11 11.500h6" stroke="#888" stroke-dasharray="1 1"/></svg><svg class="i"><use href="#clip"/></svg><span>Design1</span></div>
<div class="node child"><svg class="tw" viewBox="0 0 14 22"><path d="M1.500 0v11.500H14" stroke="#888" stroke-dasharray="1 1"/></svg><svg class="i"><use href="#sch"/></svg><span>Design1</span></div>
</div></div>
<div class="tbtabs"><span class="sel">Hierarchy</span><span>Visibility</span><span class="cut">Pr</span><div class="arr"><i class="lt"></i><i class="rt"></i></div></div>
</aside>

<section class="mdi">
<div class="view">
<svg class="sheet" viewBox="204 132 1657 656">
<path d="M204 132h1657v656H204z" fill="#ababab"/><path d="M296 132h22v656h-22z" fill="url(#gl)"/><path d="M1816 132h26v656h-26z" fill="url(#gr)"/>
<path d="M318 132h1497v656H318z" fill="#fff"/>
<path class="dots" d="M331 145.500H1812M331 159.500H1812M331 173.500H1812M331 187.500H1812M331 201.500H1812M331 215.500H1812M331 230.500H1812M331 244.500H1812M331 258.500H1812M331 272.500H1812M331 286.500H1812M331 300.500H1812M331 314.500H1812M331 328.500H1812M331 342.500H1812M331 356.500H1812M331 370.500H1812M331 384.500H1812M331 398.500H1812M331 412.500H1812M331 426.500H1812M331 440.500H1812M331 455.500H1812M331 469.500H1812M331 483.500H1812M331 497.500H1812M331 511.500H1812M331 525.500H1812M331 539.500H1812M331 553.500H1812M331 567.500H1812M331 581.500H1812M331 595.500H1812M331 609.500H1812M331 623.500H1812M331 637.500H1812M331 651.500H1812M331 666.500H1812M331 680.500H1812M331 694.500H1812M331 708.500H1812M331 722.500H1812M331 736.500H1812M331 750.500H1812M331 764.500H1812M331 778.500H1812"/>
<path class="rule" d="M318 162H1816M348 132V788M1786 132V788M498 132v30M648 132v30M798 132v30M948 132v30M1098 132v30M1248 132v30M1398 132v30M1548 132v30M1698 132v30M318 312h30M318 462h30M318 612h30M318 762h30M1786 762h30"/>
<g class="lab"><text x="421" y="152">0</text><text x="571" y="152">1</text><text x="721" y="152">2</text><text x="871" y="152">3</text><text x="1021" y="152">4</text><text x="1171" y="152">5</text><text x="1321" y="152">6</text><text x="1471" y="152">7</text><text x="1621" y="152">8</text><text x="331" y="242">A</text><text x="331" y="392">B</text><text x="331" y="542">C</text><text x="331" y="692">D</text></g>
<path class="wire" d="M613 342H556V427M684 342H768M838 342H909M978.500 342V581H556V511M753 581V610"/><circle cx="753" cy="581" r="3.300" fill="#f00"/>
<path class="part" d="M613 342h14.500l3.500-7.500 6.700 14 6.600-14 7.400 14 7.300-14 7 14 4-6.500H684M768 342h30M807 342h31M909 342h14c1-6 7-6 8 0 1-6 8-6 9 0 1-6 7-6 8 0 1-6 8-6 9 0h22M556 427v14M556 496v15M753 610v13M739.500 623h28.500M744.500 628.500h18.500M748 633.500h11M551 450h11M556.500 445v10M551 487h11M546.500 468c3-5 7-5 10 0s6 5 8 2"/>
<circle class="part" cx="556" cy="468.500" r="27.500"/><path d="M798.500 328v29M806.700 328v29" stroke="#000" stroke-width="3"/>
<g class="ref"><text x="633" y="324" textLength="25" lengthAdjust="spacingAndGlyphs">R1</text><text x="621" y="369.500" textLength="51" lengthAdjust="spacingAndGlyphs">100Ω</text><text x="788" y="316" textLength="25" lengthAdjust="spacingAndGlyphs">C1</text><text x="777" y="378.500" textLength="48" lengthAdjust="spacingAndGlyphs">10µF</text><text x="930" y="325.500" textLength="23" lengthAdjust="spacingAndGlyphs">L1</text><text x="919" y="363" textLength="45" lengthAdjust="spacingAndGlyphs">5mH</text><text x="587" y="425.500" textLength="24" lengthAdjust="spacingAndGlyphs">V1</text><text x="586" y="454" textLength="86" lengthAdjust="spacingAndGlyphs">195Vrms</text><text x="587" y="477" textLength="49" lengthAdjust="spacingAndGlyphs">35Hz</text><text x="587" y="500" textLength="20" lengthAdjust="spacingAndGlyphs">0°</text></g>
</svg>
<div class="vscroll"><svg viewBox="0 0 20 20"><path d="M5.500 12.500L10 8l4.500 4.500" stroke="#555" stroke-width="2"/></svg><div class="thumb"></div><svg viewBox="0 0 20 20"><path d="M5.500 7L10 11.500 14.500 7" stroke="#555" stroke-width="2"/></svg></div>
</div>
<div class="doctabs"><span><svg class="i"><use href="#sch"/></svg>Design1 *</span><b><svg viewBox="0 0 17 17"><path d="M2.500 3.500h8v6h-8zM6.500 8.500h8v5h-8zM12 1v4h3V1M3 4h7M7 8h8" stroke="#00007c" stroke-width="1.600"/></svg></b></div>
</section>

<aside class="instr"><div class="ibar">
<svg class="i"><use href="#mm"/></svg><svg class="i"><use href="#fg"/></svg><svg class="i"><use href="#watt"/></svg><svg class="i"><use href="#osc2"/></svg><svg class="i"><use href="#osc4"/></svg><svg class="i"><use href="#bode"/></svg><svg class="i"><use href="#fc"/></svg><svg class="i"><use href="#wg"/></svg><svg class="i"><use href="#lc"/></svg><svg class="i"><use href="#la"/></svg><svg class="i"><use href="#iv"/></svg><svg class="i"><use href="#dist"/></svg><svg class="i"><use href="#spec"/></svg><svg class="i"><use href="#net"/></svg><svg class="i"><use href="#afg"/></svg><svg class="i"><use href="#amm"/></svg><svg class="i"><use href="#aos"/></svg><svg class="i"><use href="#tos"/></svg>
<hr><svg class="i big"><use href="#lvi"/></svg><i class="rt"></i><hr><svg class="i big"><use href="#elv"/></svg><i class="rt dim"></i><hr><svg class="i last"><use href="#cp"/></svg></div></aside>
</main>

<section class="spread">
<div class="side"><b><svg viewBox="0 0 15 15"><path d="M4 4l7 7M11 4l-7 7" stroke="#000" stroke-width="2.200"/></svg></b><b><svg viewBox="0 0 15 15"><path d="M6 4l3 3.500L6 11z" fill="#999"/></svg></b><div class="vlabel">Spreadsheet View</div></div>
<div class="results"><div class="out"><p>Multisim&nbsp; -&nbsp; Tuesday, November 16, 2021, 9:30:22 AM</p></div>
<div class="stabs"><span class="sel">Results</span><span>Nets</span><span>Components</span><span>Copper layers</span><span>Simulation</span></div></div>
</section>

<footer class="status"><span class="c1">-</span><span class="c2"></span><span class="c3">AC: 19.905 Hz</span><span class="leds"><i></i><i></i><i></i><i></i><i></i><i></i><i></i></span></footer>

<footer class="taskbar">
<a><svg viewBox="0 0 30 30"><path d="M5 8l8.500-1.200V14H5zM14.500 6.700L25 5v9H14.500zM5 15h8.500v8L5 22zM14.500 15H25v9.500L14.500 23z" fill="#fff"/></svg></a>
<a><svg viewBox="0 0 30 30"><circle cx="18" cy="12" r="6.500" stroke="#fff" stroke-width="1.500"/><path d="M13.500 17L5 25" stroke="#fff" stroke-width="1.700"/></svg></a>
<a><svg viewBox="0 0 30 30"><circle cx="15" cy="15" r="8.600" stroke="#fff" stroke-width="2.500"/></svg></a>
<a><svg viewBox="0 0 30 30"><path d="M6 5v3h12V5M6 25v-3h12v3M6 11h12v8H6zM23.500 5v5M23.500 17v8" stroke="#fff" stroke-width="1.300"/><path d="M22 11.500h3v3h-3z" fill="#fff"/></svg></a>
<a class="w"><svg viewBox="0 0 30 30"><circle cx="15" cy="15" r="15" fill="#0f6fc5"/><path d="M0 14C1 5 7 0 15 0c9 0 15 6 15 12 0 5-4 8-9 8-3 0-5-1-4-3 3-4-1-8-6-8-5 0-9 2-11 5z" fill="url(#edgeA)"/><path d="M10 17c0 7 8 9 18 6-3 5-8 7-13 7-6-2-9-8-5-13z" fill="#124f9a"/><path d="M17 18c3 4 8 4 13 0v4c-8 2-14 1-13-4z" fill="#231f1e"/><circle cx="7.500" cy="22.500" r="7" fill="#ccc"/><circle cx="7.500" cy="20.500" r="2.700" fill="#888"/><path d="M3 27c1-4 8-4 9 0z" fill="#888"/></svg></a>
<a class="w"><svg viewBox="0 0 30 30"><path d="M0 11L15 1l15 10v18H0z" fill="#0f62b8"/><path d="M3 10h24v10H3z" fill="#f2f6fa"/><path d="M0 11l15 9-15 9z" fill="#1d9be6"/><path d="M30 11l-15 9 15 9z" fill="#46cdfb"/><path d="M0 29l15-11 15 11z" fill="#2aa9ee"/></svg></a>
<a class="w"><svg viewBox="0 0 30 30"><circle cx="15" cy="15" r="15" fill="url(#play)"/><path d="M8 7l11 8-9 5z" fill="#2671a6"/><path d="M14 13l9 4-10 7z" fill="#4a93bf"/></svg></a>
<a class="w"><svg viewBox="0 0 30 30"><ellipse cx="15" cy="15" rx="10.500" ry="12" stroke="url(#opera)" stroke-width="6.500"/></svg></a>
<a class="w run"><svg viewBox="0 0 30 30"><path d="M1 3h13v4H1z" fill="#e5a50a"/><path d="M1 7h11l2-2h15v20H1z" fill="#ffd45e"/><path d="M6 26V17q0-2 2-2h14q2 0 2 2v9h-4v-6h-9v6z" fill="#3b96dd"/></svg></a>
<a class="w run"><svg viewBox="0 0 30 30"><circle cx="16.500" cy="15" r="13.500" fill="#d35230"/><path d="M16.500 1.500v13.500H30A13.500 13.500 0 0 0 16.500 1.500z" fill="#ff8f6b"/><path d="M16.500 1.500A13.500 13.500 0 0 0 3 15h13.500z" fill="#ed6c47"/><rect x="1" y="7" width="15" height="16" rx="1.500" fill="#c43e1c"/><text x="8.500" y="19">P</text></svg></a>
<a class="w run"><svg viewBox="0 0 30 30"><path d="M8 1h22v7H8z" fill="#41a5ee"/><path d="M8 8h22v7H8z" fill="#2b7cd3"/><path d="M8 15h22v7H8z" fill="#185abd"/><path d="M8 22h22v6H8z" fill="#103f91"/><rect x="1" y="7" width="15" height="16" rx="1.500" fill="#185abd"/><text x="8.500" y="19">W</text></svg></a>
<a class="w"><svg viewBox="0 0 30 30"><path d="M8 1h11v7H8z" fill="#21a366"/><path d="M19 1h11v7H19z" fill="#33c481"/><path d="M8 8h11v14H8z" fill="#107c41"/><path d="M19 8h11v7H19z" fill="#21a366"/><path d="M19 15h11v7H19z" fill="#107c41"/><path d="M8 22h22v6H8z" fill="#185c37"/><rect x="1" y="7" width="15" height="16" rx="1.500" fill="#107c41"/><text x="8.500" y="19">X</text></svg></a>
<a class="w run"><svg viewBox="0 0 30 30"><circle cx="15" cy="15" r="13.700" fill="#1da05b"/><path d="M3.100 8.200A13.700 13.700 0 0 1 26.900 8.200H15l-6 4z" fill="#e0473b"/><path d="M3.100 8.200L9 18.500 15 15V8.200z" fill="#e0473b"/><path d="M26.900 8.200A13.700 13.700 0 0 1 15 28.700l6-10.200 0-6-6-4.300z" fill="#fdcf3f"/><circle cx="15" cy="15" r="6.300" fill="#f4f8fc"/><circle cx="15" cy="15" r="5" fill="#4588f3"/></svg></a>
<a class="w run active"><svg><use href="#ml"/></svg></a>
<div class="tray"><svg class="sunny" viewBox="0 0 24 24"><circle cx="12" cy="12" r="12" fill="url(#sun)"/></svg><span class="wx">78°F&nbsp; Sunny</span><svg class="chev" viewBox="0 0 16 10"><path d="M1 9l7-7 7 7" stroke="#fff" stroke-width="1.500"/></svg><svg class="batt" viewBox="0 0 20 16"><path d="M5 4h13v10H3v-4" stroke="#fff" stroke-width="1.300"/><path d="M6 6h10v6H5zM18 7h2v4h-2z" fill="#fff"/><path d="M1 3h5v4H1zM2 1v2M5 1v2M3.500 7v4" stroke="#fff"/></svg><span class="lang">ENG<br>INTL</span><span class="clock">10:11 AM<br>16-Nov-21</span><svg class="act" viewBox="0 0 20 20"><path d="M1 1.500h18v15h-6l-3 3-3-3H1z" stroke="#fff" stroke-width="1.400"/></svg><i class="desk"></i></div>
</footer>
</div>

<section class="grapher">
<header><h1>Grapher View</h1><svg viewBox="0 0 150 37"><path d="M12 18.500h12" stroke="#ccc"/><path d="M70.500 12.500h11v11h-11zM129 12.500l11.500 11.500M140.500 12.500L129 24" stroke="#000" stroke-width="1.200"/></svg></header>
<nav><span>File</span><span>Edit</span><span>View</span><span>Graph</span><span>Trace</span><span>Cursor</span><span>Legend</span><span>Tools</span><span>Help</span></nav>
<div class="gtools"><a><svg class="i"><use href="#open"/></svg></a><a><svg class="i"><use href="#save"/></svg></a><hr><a><svg class="i"><use href="#undog"/></svg></a><a><svg class="i"><use href="#x"/></svg></a><a><svg class="i"><use href="#copy"/></svg></a><a><svg class="i"><use href="#pasteg"/></svg></a><hr><a><svg class="i"><use href="#rgrid"/></svg></a><a class="on"><svg class="i"><use href="#leg"/></svg></a><a><svg class="i"><use href="#curs"/></svg></a><a class="on"><svg class="i"><use href="#bw"/></svg></a><hr><a class="on"><svg class="i"><use href="#l1"/></svg></a><a><svg class="i"><use href="#l2"/></svg></a><a><svg class="i"><use href="#l3"/></svg></a><hr><a><svg class="i"><use href="#zin"/></svg></a><a><svg class="i"><use href="#zout"/></svg></a><a><svg class="i"><use href="#zfit2"/></svg></a><a class="on"><svg class="i" viewBox="0 0 20 20"><use href="#zr"/><path d="M6.500 5.500h5v5h-5z" stroke="#00f" stroke-width="1.500"/></svg></a><a><svg class="i" viewBox="0 0 20 20"><use href="#zr"/><path d="M4 8h9M6.500 5.500L4 8l2.500 2.500M10.500 5.500L13 8l-2.500 2.500" stroke="#00f" stroke-width="1.500"/></svg></a><a><svg class="i" viewBox="0 0 20 20"><use href="#zr"/><path d="M8.500 3v10M6 5.500L8.500 3 11 5.500M6 10.500L8.500 13l2.500-2.500" stroke="#00f" stroke-width="1.500"/></svg></a><a><svg class="i"><use href="#hand"/></svg></a><hr><a class="ltr">A</a><a class="xy">(x,y)</a><hr><a><svg class="i"><use href="#wav"/></svg></a><a><svg class="i"><use href="#tree2"/></svg></a><hr><a><svg class="i"><use href="#xls"/></svg></a><a><svg class="i"><use href="#lv"/></svg></a><hr></div>
<div class="gtabs"><span>AC Sweep</span><span>AC Sweep</span><span>AC Sweep</span><span>AC Sweep</span><span>AC Sweep</span><span>AC Sweep</span><span>AC Sweep</span><span>AC Sweep</span><span>AC Sweep</span><span>AC Sweep</span><span class="sel">AC Swe</span><div class="arr"><i class="lt"></i><i class="rt"></i></div></div>
<svg class="plot" viewBox="1025 277 805 431">
<path d="M1025 277h805v431h-805z" fill="#f0f0f0"/><path d="M1027.500 277v428.500h801" stroke="#fff" stroke-width="2"/><path d="M1828 277v429M1025 706.500h803" stroke="#888" stroke-width="2"/><path d="M1030 279h795v424h-795z" fill="#000"/><path d="M1025 599v18l5-9z" fill="#f00"/>
<g class="axis"><path d="M1106.500 345v59M1103 400.500H1822M1103 345.500h3M1103 351.500h3M1103 357.500h3M1103 363.500h3M1103 369.500h3M1103 375.500h3M1103 381.500h3M1103 387.500h3M1103 394.500h3M1214.500 401v1M1277.500 401v1M1321.500 401v1M1356.500 401v1M1384.500 401v1M1408.500 401v1M1429.500 401v1M1447.500 401v1M1464.500 401v3M1571.500 401v1M1634.500 401v1M1679.500 401v1M1713.500 401v1M1742.500 401v1M1766.500 401v1M1786.500 401v1M1805.500 401v1M1821.500 401v3"/>
<path d="M1083.500 517v86M1081 602.500H1822M1080 517.500h3M1080 529.500h3M1080 541.500h3M1080 553.500h3M1080 565.500h3M1080 578.500h3M1080 590.500h3M1081.500 602v4M1192.500 603v1M1258.500 603v1M1304.500 603v1M1340.500 603v1M1369.500 603v1M1394.500 603v1M1415.500 603v1M1434.500 603v1M1451.500 603v3M1562.500 603v1M1628.500 603v1M1674.500 603v1M1710.500 603v1M1739.500 603v1M1764.500 603v1M1785.500 603v1M1804.500 603v1M1821.500 603v3"/></g>
<path class="trace" d="M1356 348.500l30 1.500 30 1.500 36 4.500 24 4 24 5 36 11 33.500 16.500M1341 526.500l30 5 30 5.500 30 7 30 8 30 8.500 30 12.500 40.500 18"/>
<path class="trace" d="M1058 478.500h51M1058 680.500h51"/>
<path class="mark" d="M1356.500 345l3 6h-6zM1416.500 348.500l3 6h-6zM1476.500 356.500l3 6h-6zM1536.500 372.500l3 6h-6zM1341.500 523l3 6h-6zM1401.500 533.500l3 6h-6zM1461.500 548.500l3 6h-6zM1521.500 569.500l3 6h-6z"/>
<path d="M1036 469v16l5-8zM1036 672v16l5-8z" fill="#f00"/><path d="M1042 470h12v13h-12zM1042 673h12v13h-12z" fill="#fff"/><path d="M1044 477l3 4 5-9M1044 680l3 4 5-9" stroke="#000" stroke-width="1.800"/>
<g class="ptext"><text class="t1" x="1378" y="305" textLength="99" lengthAdjust="spacingAndGlyphs">Design1</text><text class="t1" x="1364" y="336" textLength="128" lengthAdjust="spacingAndGlyphs">AC Sweep</text>
<text class="t2" x="1396" y="452" textLength="136" lengthAdjust="spacingAndGlyphs">Frequency (Hz)</text><text class="t2" x="1383" y="654" textLength="136" lengthAdjust="spacingAndGlyphs">Frequency (Hz)</text>
<text class="t2" transform="translate(1051 400) rotate(-90)" textLength="94" lengthAdjust="spacingAndGlyphs">Magnitude</text><text class="t2" transform="translate(1051 602) rotate(-90)" textLength="107" lengthAdjust="spacingAndGlyphs">Phase (deg)</text>
<text x="1062" y="361" textLength="40">1.000</text><text x="1062" y="396" textLength="40">0.991</text><text x="1106" y="424">1</text><text x="1455" y="424">10</text><text x="1794" y="424" textLength="27">100</text>
<text x="1060" y="533">-1</text><text x="1060" y="571">-5</text><text x="1060" y="598">-8</text><text x="1081" y="626">1</text><text x="1442" y="626">10</text><text x="1794" y="626" textLength="27">100</text>
<text class="t3" x="1058" y="472" textLength="25" lengthAdjust="spacingAndGlyphs">V(3)</text><text class="t3" x="1058" y="675" textLength="25" lengthAdjust="spacingAndGlyphs">V(3)</text></g>
</svg>
<footer><span>Selected Trace:V(3)</span><svg viewBox="0 0 20 24"><path d="M.5 2v21" stroke="#ccc"/><path d="M14 12h3v3h-3zM10 16h3v3h-3zM14 16h3v3h-3zM6 20h3v3H6zM10 20h3v3h-3zM14 20h3v3h-3z" fill="#bbb"/></svg></footer>
</section>
</body>
</html>
```
FILE: styles.css
```css
*{box-sizing:border-box}
body{margin:0;width:1920px;height:1080px;overflow:hidden;background:#f0f0f0;color:#111;font:14.5px/1 "Open Sans","Noto Sans",sans-serif}
h1,h2,p{margin:0;font-weight:400;font-size:inherit}
svg{fill:none;flex:none;display:block}
.defs{position:absolute;width:0;height:0}
.i{width:20px;height:20px;shape-rendering:crispEdges}
.probes .i{shape-rendering:auto}
a,b{display:flex;align-items:center;justify-content:center;flex:none}
.app{display:flex;flex-direction:column;height:1080px}

.title{height:30px;display:flex;align-items:center;background:#fff;border-bottom:1px solid #a0a0a0;padding-left:2px;color:#999;letter-spacing:0;flex:none}
.logo{width:20px;height:20px;margin-right:5px}
.winbtn{width:170px;height:29px;margin-left:auto}
.menu{height:31px;flex:none;display:grid;grid-template-columns:28px 36px 39px 45px 48px 45px 71px 66px 49px 64px 65px 68px 40px 1fr;align-items:center;padding-left:4px;border-bottom:1px solid #a0a0a0;letter-spacing:-.25px;white-space:nowrap}
u{text-underline-offset:2px;text-decoration-thickness:1px}
.mdibtn{display:flex;justify-self:end;align-self:end;gap:2px;margin:0 4px 3px 0}
.mdibtn b{width:19px;height:18px;border:1px solid;border-color:#fff #777 #777 #fff;box-shadow:1px 1px 0 #bbb}
.mdibtn svg{width:18px;height:16px}

.row{display:flex;height:32px;flex:none}
.bar{display:flex;align-items:center;height:32px;padding:0 2px 0 11px;border:1px solid;border-color:#fafafa #a0a0a0 #a0a0a0 transparent;flex:none;border-left:0}
.bar a{width:28px;height:27px}
.bar hr,.gtools hr{width:8px;height:25px;margin:0;border:0;background:linear-gradient(90deg,transparent 3px,#a0a0a0 3px 4px,#fff 4px 5px,transparent 5px);flex:none}
.bar .on{background:#f8f8f8;border:1px solid;border-color:#999 #fff #fff #999}
.bar .wide{width:30px}
.second{padding-left:12px}
.combo{width:187px;height:26px;background:#e3e3e3;border:1px solid #adadad;display:flex;align-items:center;justify-content:space-between;padding:0 5px 0 4px;margin-left:1px;font-size:13px;letter-spacing:-.3px}
.combo svg{width:12px;height:8px}
.dn{width:14px;display:flex;justify-content:center;flex:none}
.dn::before{content:"";border:3px solid transparent;border-top:4px solid #000;border-bottom:0}
.zoombar{margin-left:361px}
.simbar{width:267px;padding-left:11px}
.simbar .wr{width:18px;height:18px;margin:-3px 1px 0 1px}
.simbar span{margin-top:-4px;letter-spacing:-.1px}
.probes text{font:bold 10px "Liberation Sans",sans-serif;fill:#5d8a59;text-anchor:middle}
.probes .inv{fill:#fff}

.main{height:702px;display:flex;flex:none}
.toolbox{width:198px;border-right:1px solid #777;border-bottom:1px solid #999;box-shadow:inset -1px 0 0 #fff,inset -5px 0 0 #f0f0f0,inset -6px 0 0 #ddd;height:698px;padding:4px 10px 0 3px;flex:none}
.tbhead{display:flex;align-items:center;height:25px;gap:3px}
.tbhead h2{width:148px;height:25px;line-height:22px;padding-left:3px;background:linear-gradient(90deg,#bfcddb,#d6e4f2);letter-spacing:.05px}
.tbhead b,.side b{width:15px;height:15px;border:1px solid;border-color:#fff #777 #777 #fff;background:#f0f0f0;box-shadow:1px 1px 0 #999}
.tbhead b svg,.side b svg{width:13px;height:13px}
.tbpane{margin-top:4px;width:183px;height:637px;border:1px solid;border-color:#fff #777 #777 #fff;box-shadow:1px 1px 0 #999;padding:1px 1px 0 1px}
.tbtools{height:28px;display:flex;gap:10px;padding:4px 0 0 5px}
.tree{height:605px;background:#fff;border:1px solid #828790;padding-top:2px}
.node{display:flex;height:22px;align-items:center;padding-left:9px;letter-spacing:-.25px}
.node .tw{width:19px;height:22px}
.node span{padding:0 4px;line-height:22px;margin-left:1px}
.child{padding-left:37px}
.child .tw{width:13px}
.child span{background:#efefef;padding:0 3px;margin-left:3px}
.tbtabs,.stabs{display:flex;font-size:13px;letter-spacing:-.35px;align-items:flex-start}
.tbtabs span,.stabs span{height:22px;line-height:20px;border:1px solid;border-color:transparent #777 #777 #fff;box-shadow:1px 1px 0 #aaa;flex:none;white-space:nowrap}
.tbtabs{padding-top:1px}
.tbtabs span{padding:0 5px;width:57px;margin-right:2px;letter-spacing:-.2px}
.tbtabs .sel{width:68px;height:23px;line-height:23px;margin-right:0;padding-left:7px}
.tbtabs .cut{width:17px;margin-right:0;overflow:hidden;border-right:0;box-shadow:none;padding-left:4px}
.arr{display:flex;height:19px;flex:none}
.arr i{width:19px;border:1px solid #bbb;display:flex;align-items:center;justify-content:center}
.tbtabs .arr{margin-top:3px;margin-left:1px}
.lt::before{content:"";border:4px solid transparent;border-right:5px solid #000;border-left:0}
.rt::before{content:"";border:4px solid transparent;border-left:5px solid #000;border-right:0}

.mdi{width:1690px;border:1px solid #777;border-width:1px 1px 0 0;padding:4px 4px 0 5px;display:flex;flex-direction:column;flex:none}
.view{display:flex;height:661px;border:1px solid;border-width:2px 2px 3px 1px;border-color:#777 #eee #fff #777;flex:none}
.sheet{width:1657px;height:656px}
.dots{stroke:#909090;stroke-width:1;stroke-dasharray:1 13.0625;shape-rendering:crispEdges}
.rule{stroke:#808080;stroke-width:2}
.lab{fill:#808080;font:15px "Liberation Sans",sans-serif;text-anchor:middle}
.wire{stroke:#f00;stroke-width:2}
.part{stroke:#000;stroke-width:1.8}
.ref{fill:#000;font:bold 20px "Liberation Sans",sans-serif}
.vscroll{width:20px;background:#f0f0f0;display:flex;flex-direction:column}
.vscroll svg{width:20px;height:20px}
.thumb{height:359px;background:#cdcdcd;margin-bottom:auto}
.doctabs{height:31px;margin:4px -4px 0 -5px;border-top:1px solid #777;display:flex;justify-content:space-between;flex:none}
.doctabs span{display:flex;align-items:center;gap:4px;width:96px;height:28px;margin:-1px 0 0 4px;padding:2px 0 0 2px;background:#f0f0f0;border:1px solid #000;border-width:0 2px 2px 1px;border-left-color:#fff;border-radius:0 0 3px 3px;white-space:nowrap;letter-spacing:-.35px}
.doctabs b{width:17px;height:17px;margin:6px 2px 0 0;background:#fff;border:1px solid;border-color:#fff #777 #777 #fff}
.doctabs b svg{width:17px;height:17px}
.instr{width:32px;height:698px;border-bottom:1px solid #a0a0a0;border-top:1px solid #aaa;flex:none}
.ibar{height:613px;padding:14px 0 0 4px;border:1px solid;border-color:#fff #a0a0a0 #a0a0a0 transparent;display:flex;flex-direction:column;gap:6px}
.ibar hr{width:27px;height:2px;border:0;border-top:1px solid #a0a0a0;background:#fff;margin:0 0 0 -3px;flex:none}
.ibar .big{margin-top:2px}
.ibar i{margin:-2px 0 0 7px;height:8px}
.ibar .rt::before{display:block;width:0}
.dim{opacity:.4}

.spread{height:179px;border-top:1px solid #666;border-bottom:0;display:flex;flex:none}
.side{width:32px;padding:3px 0 0 2px}
.side b{margin:0 0 3px 5px}
.vlabel{width:25px;height:134px;background:linear-gradient(#bfcddb,#d6e4f2);writing-mode:vertical-rl;transform:rotate(180deg);line-height:18px;padding-top:4px;font-size:14px;white-space:nowrap;letter-spacing:.1px}
.results{width:1881px;padding-top:6px}
.out{background:#fff;border:1px solid #828790;outline:1px solid #eee;box-shadow:2px 2px 0 1px #777;width:1879px;padding:8px 0 0 27px;height:141px}
.out p{letter-spacing:-.15px;white-space:pre}
.stabs{padding-top:2px;margin-left:1px}
.stabs span{padding:0 3px;margin-right:2px;height:21px;width:81px;line-height:19px}
.stabs span:nth-child(2){width:46px}.stabs span:nth-child(4){width:88px}.stabs span:nth-child(5){width:71px}
.stabs .sel{height:24px;line-height:23px;width:54px;margin-right:0;padding-left:4px}
.status{height:24px;border-top:1px solid #a0a0a0;box-shadow:inset 0 1px 0 #fff,inset 0 2px 0 #d8d8d8;display:flex;align-items:flex-end;flex:none;font-size:14px}
.status span{height:20px;line-height:21px;border-right:1px solid #d0d0d0}
.c1{width:1490px;padding-left:1341px}.c2{width:183px}.c3{width:183px;padding-left:4px;letter-spacing:-.05px}
.leds{display:flex;gap:2px;padding:3px 0 0 4px;border:0!important}
.leds i{width:6px;height:13px;border:1px solid #aaa;border-right-color:#fff;border-bottom-color:#fff;background:#e8e8e8}

.taskbar{height:50px;background:#231f1e;display:flex;flex:none;color:#f4f4f4}
.taskbar a{width:60px;height:50px;border:solid transparent;border-width:3px 0}
.taskbar a svg{width:30px;height:30px}
.taskbar .w{width:62px}
.taskbar a text{font:bold 12px "Open Sans",sans-serif;fill:#fff;text-anchor:middle}
.taskbar .w:nth-of-type(5){margin-left:3px}
.taskbar .run{background:linear-gradient(#76b9ed,#76b9ed) center bottom/51px 3px no-repeat border-box}
.taskbar .active{width:61px;background:linear-gradient(#76b9ed,#76b9ed) bottom/100% 3px no-repeat border-box,#4b4948 border-box}
.tray{display:flex;align-items:center;margin-left:auto;width:401px;height:50px;font-size:14.500px;letter-spacing:-.3px}
.sunny{width:24px;height:24px}
.wx{width:122px;padding-left:13px;font-size:17px;letter-spacing:0;white-space:nowrap;padding-top:2px}
.chev{width:16px;height:10px;margin-left:6px}
.batt{width:20px;height:16px;margin:0 12px 0 12px}
.lang{width:32px;line-height:23px;text-align:center;margin-right:8px}
.clock{width:80px;line-height:23px;text-align:center;letter-spacing:-.35px;margin-right:17px}
.act{width:20px;height:20px}
.desk{width:1px;height:50px;background:#777;margin-left:25px}

.grapher{position:absolute;left:1024px;top:155px;width:807px;height:579px;border:1px solid #6b6b6b;background:#f0f0f0;box-shadow:2px 7px 14px 2px rgba(0,0,0,.36);display:flex;flex-direction:column}
.grapher header{height:38px;background:#fff;border-bottom:1px solid #a0a0a0;display:flex;align-items:center;justify-content:space-between;padding-left:9px;letter-spacing:-.25px;flex:none}
.grapher h1{padding-top:1px}
.grapher header svg{width:150px;height:37px;margin-right:15px}
.grapher nav{height:30px;border-bottom:1px solid #a0a0a0;display:grid;grid-template-columns:37px 38px 45px 53px 49px 55px 62px 49px 50px;padding:2px 0 0 10px;align-items:center;letter-spacing:-.25px;flex:none}
.gtools{height:30px;border-bottom:1px solid #a0a0a0;display:flex;align-items:center;flex:none}
.gtools a{width:29.2px;height:27px}
.gtools hr{width:5.2px}
.gtools .on{background:#bfdcf3;border:1px solid #90c8f6}
.ltr{font:bold 19px "Liberation Serif",serif}
.xy{font:italic 14px "Liberation Serif",serif;color:#999}
.gtabs{height:23px;display:flex;padding:2px 0 0 3px;font-size:13px;letter-spacing:-.4px;flex:none}
.gtabs span{width:71px;height:20px;margin-top:1px;line-height:19px;padding-left:5px;border:1px solid;border-color:#fff #777 transparent #fff;border-right-width:2px;flex:none;overflow:hidden;white-space:nowrap}
.gtabs .sel{width:52px;border-right:0;margin-top:-1px;height:22px}
.plot{width:805px;height:431px;flex:none}
.axis{stroke:#fff;shape-rendering:crispEdges}
.trace{stroke:#f00;stroke-width:1.2}
.mark{fill:#000;stroke:#fff}
.ptext{fill:#fff;font:16px "Liberation Sans",sans-serif}
.t1{font-size:25.500px}.t2{font-size:20px}.t3{font-size:13.500px}
.grapher footer{height:24px;border-top:1px solid #ddd;display:flex;justify-content:space-between;align-items:center;padding:2px 0 0 2px;letter-spacing:-.15px}
.grapher footer svg{width:20px;height:24px}
```
